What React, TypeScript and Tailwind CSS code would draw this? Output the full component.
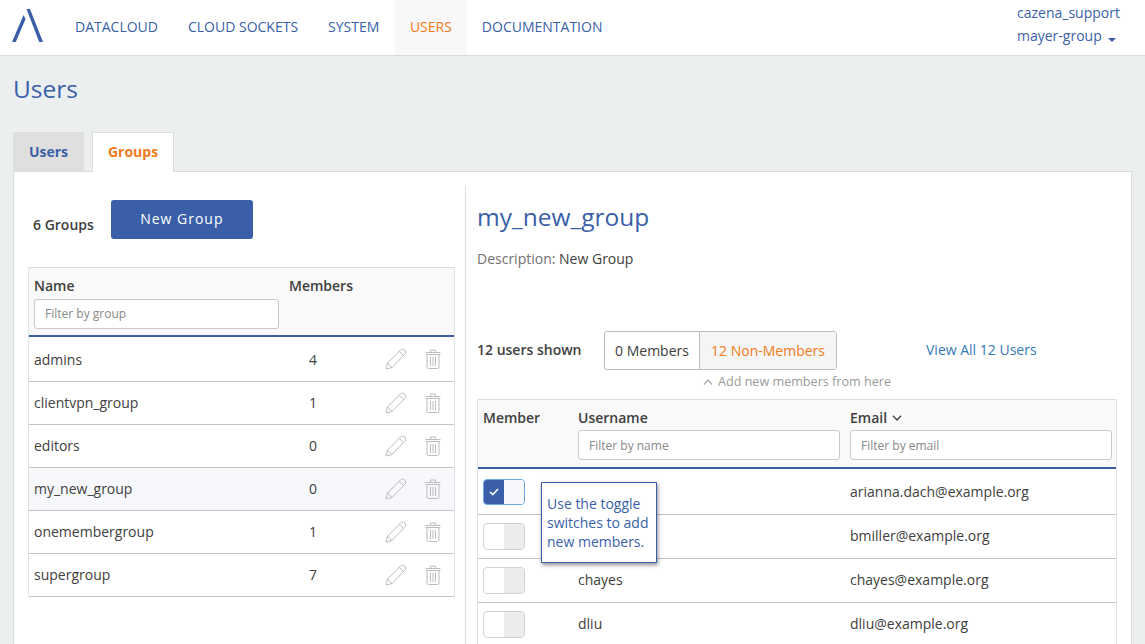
import React from 'react';

const navItems = ['DATACLOUD', 'CLOUD SOCKETS', 'SYSTEM', 'USERS', 'DOCUMENTATION'];
const groups = [
  { name: 'admins', members: 4, h: 'h-[45px]', text: 'pt-[2px]' },
  { name: 'clientvpn_group', members: 1, h: 'h-[43px]', text: '' },
  { name: 'editors', members: 0, h: 'h-[43px]', text: '' },
  { name: 'my_new_group', members: 0, h: 'h-[43px]', text: '', active: true },
  { name: 'onemembergroup', members: 1, h: 'h-[43px]', text: '' },
  { name: 'supergroup', members: 7, h: 'h-[43px]', text: '' },
];
const users = [
  { name: '', email: 'arianna.dach@example.org', on: true, h: 'h-[46px]', text: '' },
  { name: '', email: 'bmiller@example.org', on: false, h: 'h-[44px]', text: 'pb-[2px]' },
  { name: 'chayes', email: 'chayes@example.org', on: false, h: 'h-[44px]', text: 'pb-[2px]' },
  { name: 'dliu', email: 'dliu@example.org', on: false, h: 'h-[44px]', text: 'pb-[2px]' },
];

const Logo = () => (
  <svg width="32" height="34" viewBox="0 0 32 34" className="text-[#3a5fa8]" fill="currentColor">
    <path d="M14.5 0 L18 0 L31 33 L27.2 33 Z" />
    <path d="M11.5 6 L13.5 10 L3.8 33 L0 33 Z" />
  </svg>
);

const Pencil = () => (
  <svg width="22" height="22" viewBox="0 0 22 22" fill="none" stroke="#bcbcbc" strokeWidth="1">
    <path d="M1 21 L2.5 15 L15.5 2 C16.8 0.8 18.5 0.8 19.8 2 C21 3.3 21 5 19.8 6.3 L7 19.5 Z" />
    <path d="M2.5 15 L7 19.5 M14.2 3.4 L18.6 7.6" />
  </svg>
);

const Trash = () => (
  <svg width="16" height="20" viewBox="0 0 16 20" fill="none" stroke="#bcbcbc" strokeWidth="1">
    <path d="M0.5 3.5 H15.5 M5.5 3.5 V1 H10.5 V3.5" />
    <path d="M0.8 5.5 H15.2" />
    <path d="M2 5.5 V18 C2 18.8 2.6 19.5 3.4 19.5 H12.6 C13.4 19.5 14 18.8 14 18 V5.5" />
    <path d="M5.5 8 V17 M8 8 V17 M10.5 8 V17" />
  </svg>
);

const Toggle = ({ on }: { on: boolean }) =>
  on ? (
    <div className="flex h-[26px] w-[42px] overflow-hidden rounded border border-[#6ea6e0] bg-white">
      <div className="flex w-[20px] items-center justify-center bg-[#3a5fa8]">
        <svg width="10" height="8" viewBox="0 0 10 8" fill="none" stroke="#fff" strokeWidth="1.6">
          <path d="M1 4 L3.8 6.6 L9 1" />
        </svg>
      </div>
      <div className="flex-1 bg-[#f7f8fe]" />
    </div>
  ) : (
    <div className="flex h-[27px] w-[42px] overflow-hidden rounded border border-[#d2d2d2] bg-white">
      <div className="w-[20px]" />
      <div className="flex-1 bg-[#ececec]" />
    </div>
  );

const FilterInput = ({ placeholder, className }: { placeholder: string; className: string }) => (
  <input
    placeholder={placeholder}
    className={`block h-[30px] rounded-[3px] border border-[#c8c8c8] bg-white px-[10px] text-xs text-[#555] placeholder:text-[#888] ${className}`}
  />
);

export default function App() {
  return (
    <div className="h-[644px] w-[1145px] overflow-hidden bg-[#ebeff0] font-['Open_Sans',sans-serif] text-sm text-[#404040]">
      <header className="flex h-[56px] items-stretch border-b border-[#dcdcdc] bg-white">
        <div className="flex w-[60px] items-center pb-[3px] pl-[12px]">
          <Logo />
        </div>
        <nav className="flex flex-1 items-stretch">
          {navItems.map((item) => (
            <a
              key={item}
              className={
                item === 'USERS'
                  ? 'ml-[0.5px] flex items-center bg-[#f8f8f8] px-[15px] pb-[2px] text-[#f47a20]'
                  : 'flex items-center px-[15px] pb-[2px] text-[#3a5fa8]'
              }
            >
              {item}
            </a>
          ))}
        </nav>
        <div className="w-[128px] pt-[3px] text-[#3a5fa8]">
          <div className="leading-[20px]">cazena_support</div>
          <div className="mt-[3px] flex items-center leading-[20px]">
            mayer-group
            <span className="mt-[8px] ml-[6px] border-x-[4px] border-t-[4px] border-x-transparent border-t-[#3a5fa8]" />
          </div>
        </div>
      </header>

      <main className="px-[13px]">
        <h1 className="pt-[15px] text-[24.5px] leading-[36px] text-[#3a5fa8]">Users</h1>

        <div className="mt-[25px] flex items-end gap-[8px]">
          <div className="flex h-[39px] w-[71px] items-center justify-center bg-[#dfdfdf] font-bold text-[#3a5fa8]">Users</div>
          <div className="relative -mb-px flex h-[40px] w-[82px] items-center justify-center border border-b-0 border-[#dcdcdc] bg-white pb-[2px] font-bold text-[#f47a20]">
            Groups
          </div>
        </div>

        <section className="flex h-[600px] w-[1119px] border border-[#dcdcdc] bg-white pt-[14px]">
          <div className="w-[452px] shrink-0 border-r border-[#dcdcdc] pr-[10px] pl-[14px]">
            <div className="flex items-center pt-[14px]">
              <span className="pt-[10px] pl-[5px] font-semibold">6 Groups</span>
              <button className="ml-[17px] h-[39px] w-[142px] rounded-[3px] bg-[#3a5fa8] pb-[2px] font-medium tracking-[1px] text-white">New Group</button>
            </div>

            <div className="mt-[28px] w-[427px] border-x border-[#e2e2e2]">
              <div className="flex h-[70px] border-t border-b-2 border-t-[#dcdcdc] border-b-[#3a5fa8] bg-[#f9f9f9] pl-[5px]">
                <div className="w-[255px] pt-[8px]">
                  <div className="leading-[19px] font-semibold">Name</div>
                  <FilterInput placeholder="Filter by group" className="mt-[4px] w-[245px] pb-[2px]" />
                </div>
                <div className="pt-[8px] leading-[19px] font-semibold">Members</div>
              </div>
              {groups.map((g) => (
                <div
                  key={g.name}
                  className={`flex items-center border-b border-[#c4c4c4] pl-[5px] ${g.h} ${g.active ? 'bg-[#f6f8fb]' : 'bg-white'}`}
                >
                  <span className={`w-[270px] ${g.text}`}>{g.name}</span>
                  <span className={`w-[18px] text-center ${g.text}`}>{g.members}</span>
                  <span className="ml-[63px] flex items-center gap-[18px]">
                    <Pencil />
                    <Trash />
                  </span>
                </div>
              ))}
            </div>
          </div>

          <div className="relative flex-1 pl-[11px]">
            <h2 className="pt-[13px] text-[24.5px] leading-[36px] text-[#3a5fa8]">my_new_group</h2>
            <p className="mt-[14px] leading-[20px]">
              <span className="text-[#707070]">Description:</span> New Group
            </p>

            <div className="mt-[62px] flex items-center">
              <span className="mb-[2px] w-[127px] font-semibold">12 users shown</span>
              <div className="flex h-[39px] w-[233px] overflow-hidden rounded-[3px] border border-[#bdbdbd]">
                <div className="flex w-[95px] items-center justify-center border-r border-[#bdbdbd]">0 Members</div>
                <div className="flex flex-1 items-center justify-center bg-[#f5f5f5] text-[#f47a20]">12 Non-Members</div>
              </div>
              <a className="mb-[2px] ml-[89px] text-[#3579b8]">View All 12 Users</a>
            </div>
            <div className="mt-[2px] ml-[226px] flex h-[19px] items-center gap-[5px] text-[12.6px] text-[#9a9a9a]">
              <svg width="10" height="6" viewBox="0 0 10 6" fill="none" stroke="#aaa" strokeWidth="1.2">
                <path d="M1 5.5 L5 1 L9 5.5" />
              </svg>
              Add new members from here
            </div>

            <div className="mt-[8px] w-[640px] border-x border-[#e2e2e2]">
              <div className="flex h-[70px] border-t border-b-2 border-t-[#dcdcdc] border-b-[#3a5fa8] bg-[#f9f9f9] pt-[8px] pl-[5px]">
                <div className="w-[95px] leading-[19px] font-semibold">Member</div>
                <div className="w-[272px]">
                  <div className="leading-[19px] font-semibold">Username</div>
                  <FilterInput placeholder="Filter by name" className="mt-[3px] w-[262px]" />
                </div>
                <div>
                  <div className="flex items-center gap-[5px] leading-[19px] font-semibold">
                    Email
                    <svg width="10" height="6" viewBox="0 0 10 6" fill="none" stroke="#404040" strokeWidth="1.3">
                      <path d="M1 0.7 L5 5 L9 0.7" />
                    </svg>
                  </div>
                  <FilterInput placeholder="Filter by email" className="mt-[3px] w-[262px]" />
                </div>
              </div>
              {users.map((u) => (
                <div key={u.email} className={`flex items-center border-b border-[#c4c4c4] pl-[5px] ${u.h}`}>
                  <div className="w-[95px]">
                    <Toggle on={u.on} />
                  </div>
                  <div className={`w-[272px] ${u.text}`}>{u.name}</div>
                  <div className={u.text}>{u.email}</div>
                </div>
              ))}
            </div>

            <div className="absolute top-[296px] left-[75px] w-[116px] border border-[#3a5fa8] bg-white px-[5px] pt-[11px] pb-[11px] leading-[19px] text-[#3a5fa8] shadow-[1px_2px_4px_rgba(0,0,0,0.45)]">
              Use the toggle switches to add new members.
            </div>
          </div>
        </section>
      </main>
    </div>
  );
}
